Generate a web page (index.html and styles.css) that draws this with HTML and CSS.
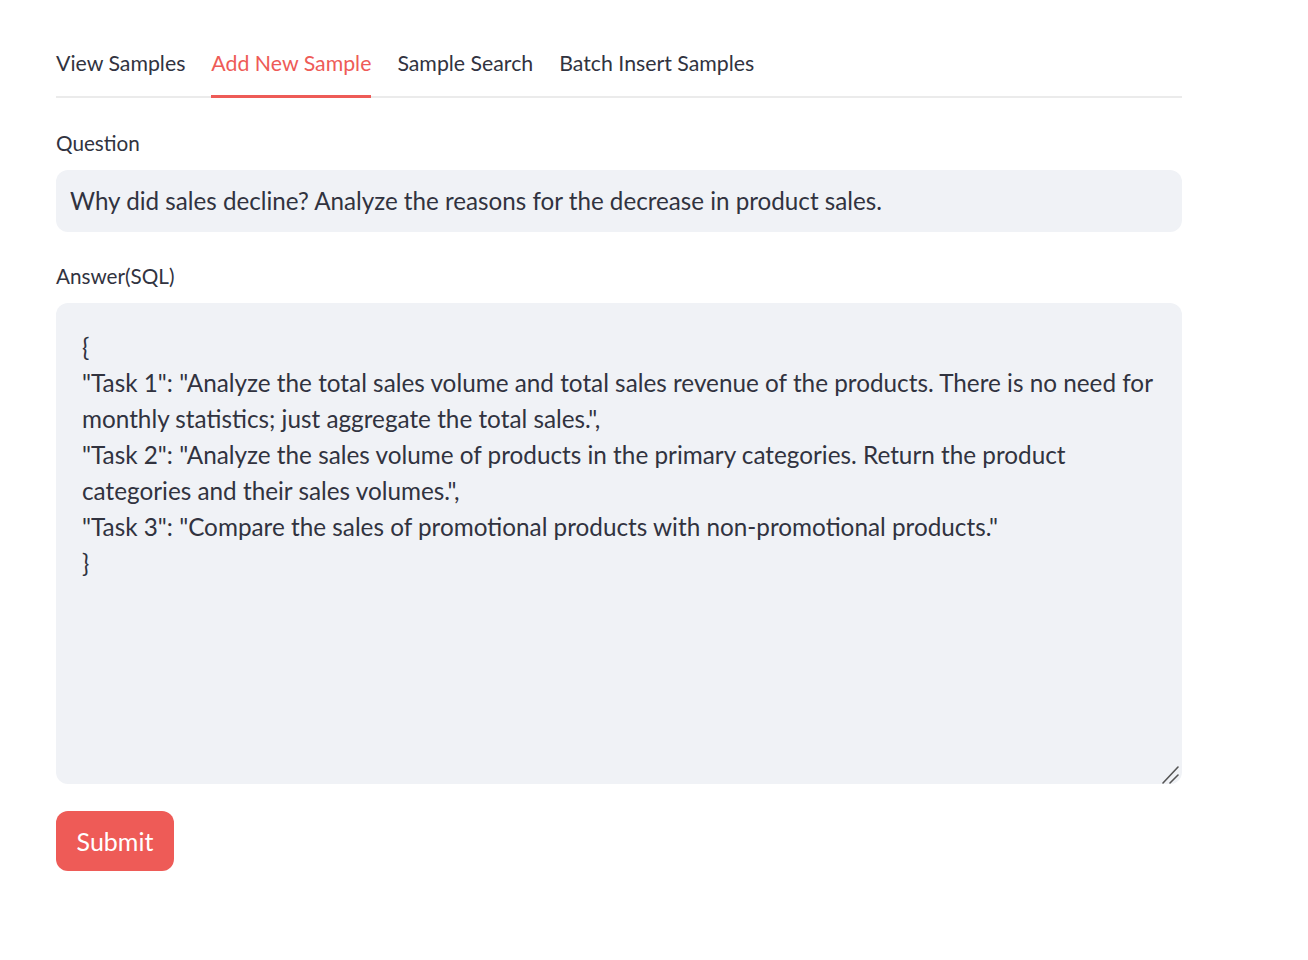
FILE: index.html
```html
<!DOCTYPE html>
<html lang="en">
<head>
<meta charset="utf-8">
<title>Add New Sample</title>
<link rel="stylesheet" href="styles.css">
</head>
<body>
<main class="main">
  <nav class="tabs">
    <div class="tab">View Samples</div>
    <div class="tab active">Add New Sample</div>
    <div class="tab">Sample Search</div>
    <div class="tab">Batch Insert Samples</div>
  </nav>
  <form class="form">
    <label class="label" for="q">Question</label>
    <input id="q" class="input" type="text" value="Why did sales decline? Analyze the reasons for the decrease in product sales.">
    <label class="label label-answer" for="a">Answer(SQL)</label>
    <div class="textarea-wrap">
      <textarea id="a" class="textarea" wrap="off">{
"Task 1": "Analyze the total sales volume and total sales revenue of the products. There is no need for
monthly statistics; just aggregate the total sales.",
"Task 2": "Analyze the sales volume of products in the primary categories. Return the product
categories and their sales volumes.",
"Task 3": "Compare the sales of promotional products with non-promotional products."
}</textarea>
      <svg class="resizer" width="20" height="20" viewBox="0 0 20 20" aria-hidden="true">
        <line x1="3" y1="19" x2="18" y2="3" stroke="#555" stroke-width="1.6" stroke-linecap="round"/>
        <line x1="10" y1="19" x2="18" y2="11" stroke="#555" stroke-width="1.6" stroke-linecap="round"/>
      </svg>
    </div>
    <div class="actions">
      <button type="button" class="btn">Submit</button>
    </div>
  </form>
</main>
</body>
</html>
```
FILE: styles.css
```css
html, body {
  margin: 0;
  padding: 0;
  background: #ffffff;
}
body {
  font-family: "Lato", "Noto Sans", sans-serif;
  color: #31333f;
}
.main {
  width: 1126px;
  padding: 45px 0 0 56px;
}
.tabs {
  display: flex;
  gap: 26px;
  border-bottom: 2px solid #ebebeb;
}
.tab {
  font-size: 21.3px;
  line-height: 36px;
  padding-bottom: 14px;
  margin-bottom: -2px;
  border-bottom: 3px solid transparent;
  color: #31333f;
}
.tab.active {
  color: #ee5b57;
  border-bottom-color: #ee5b57;
}
.form {
  display: flex;
  flex-direction: column;
  align-items: stretch;
}
.label {
  font-size: 20.7px;
  line-height: 30px;
  margin-top: 30px;
  margin-bottom: 12px;
}
.label-answer {
  margin-top: 29px;
}
.input {
  box-sizing: border-box;
  height: 62px;
  width: 100%;
  border: 1px solid transparent;
  border-radius: 12px;
  background: #f0f2f6;
  font-family: inherit;
  font-size: 24.2px;
  color: #31333f;
  padding: 0 13px 2px;
  outline: none;
}
.textarea-wrap {
  position: relative;
  height: 481px;
}
.textarea {
  box-sizing: border-box;
  display: block;
  height: 100%;
  width: 100%;
  border: 1px solid transparent;
  border-radius: 12px;
  background: #f0f2f6;
  font-family: inherit;
  font-size: 24.3px;
  line-height: 36px;
  color: #31333f;
  padding: 25px 25px;
  resize: none;
  overflow: hidden;
  outline: none;
}
.resizer {
  position: absolute;
  right: 2px;
  bottom: 0;
}
.actions {
  display: flex;
  margin-top: 27px;
}
.btn {
  height: 60px;
  width: 118px;
  border: none;
  border-radius: 12px;
  background: #ee5b57;
  color: #ffffff;
  font-family: inherit;
  font-size: 25px;
  cursor: pointer;
}
```
